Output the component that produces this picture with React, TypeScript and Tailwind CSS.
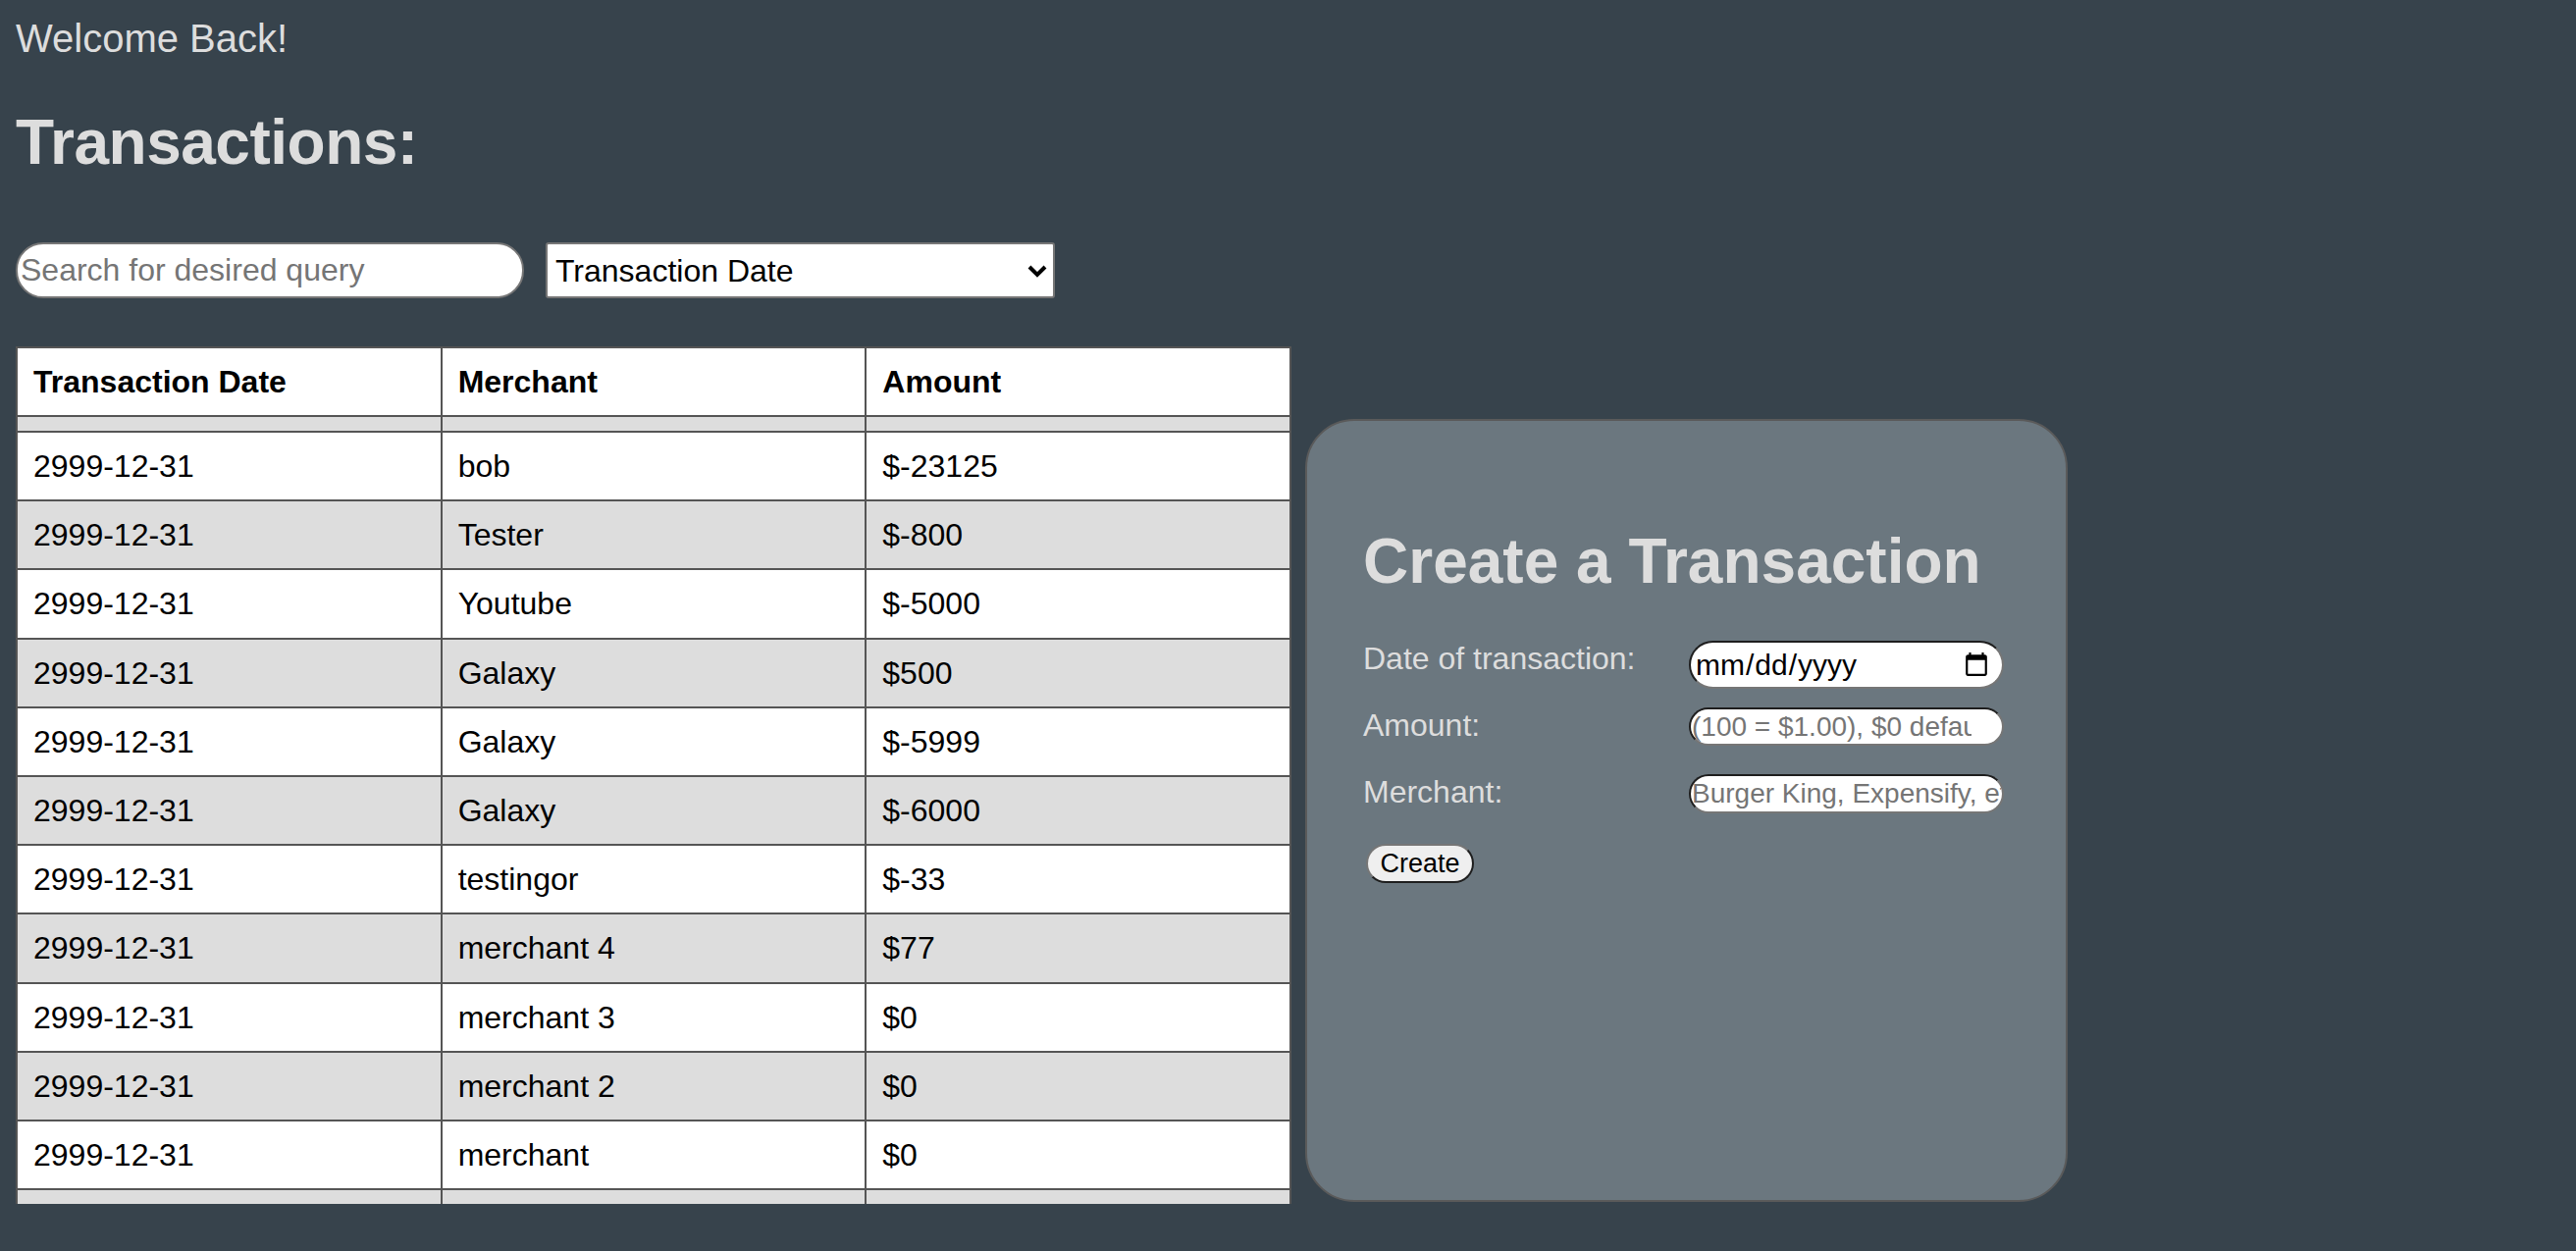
import { useState } from 'react';

const transactions = [
  { date: '2999-12-31', merchant: 'bob', amount: '$-23125' },
  { date: '2999-12-31', merchant: 'Tester', amount: '$-800' },
  { date: '2999-12-31', merchant: 'Youtube', amount: '$-5000' },
  { date: '2999-12-31', merchant: 'Galaxy', amount: '$500' },
  { date: '2999-12-31', merchant: 'Galaxy', amount: '$-5999' },
  { date: '2999-12-31', merchant: 'Galaxy', amount: '$-6000' },
  { date: '2999-12-31', merchant: 'testingor', amount: '$-33' },
  { date: '2999-12-31', merchant: 'merchant 4', amount: '$77' },
  { date: '2999-12-31', merchant: 'merchant 3', amount: '$0' },
  { date: '2999-12-31', merchant: 'merchant 2', amount: '$0' },
  { date: '2999-12-31', merchant: 'merchant', amount: '$0' },
];

const cell = 'border-r-2 border-b-2 border-[#555555] px-4 align-middle';

const TransactionTable = () => {
  return (
    <div className="h-[874px] w-[1300px] shrink-0 overflow-hidden">
      <table className="w-full table-fixed border-separate border-spacing-0 border-l-2 border-t-2 border-[#555555] text-[32px] text-black">
        <thead>
          <tr className="bg-white">
            <th className={`${cell} h-[70px] text-left font-bold`}>Transaction Date</th>
            <th className={`${cell} h-[70px] text-left font-bold`}>Merchant</th>
            <th className={`${cell} h-[70px] text-left font-bold`}>Amount</th>
          </tr>
        </thead>
        <tbody>
          <tr className="bg-[#dddddd]">
            <td className={`${cell} h-[16px]`}></td>
            <td className={`${cell} h-[16px]`}></td>
            <td className={`${cell} h-[16px]`}></td>
          </tr>
          {transactions.map((t, i) => (
            <tr key={i} className={i % 2 === 0 ? 'bg-white' : 'bg-[#dddddd]'}>
              <td className={`${cell} h-[70.2px]`}>{t.date}</td>
              <td className={`${cell} h-[70.2px]`}>{t.merchant}</td>
              <td className={`${cell} h-[70.2px]`}>{t.amount}</td>
            </tr>
          ))}
          {/* next row, cut off by the scroll box */}
          <tr className="bg-[#dddddd]">
            <td className={`${cell} h-[70px]`}></td>
            <td className={`${cell} h-[70px]`}></td>
            <td className={`${cell} h-[70px]`}></td>
          </tr>
        </tbody>
      </table>
    </div>
  );
};

const fieldBorder =
  'rounded-full border-2 border-t-[#1e1e1e] border-l-[#1e1e1e] border-r-[#767676] border-b-[#767676] bg-white text-black';

const CreateTransaction = () => {
  return (
    <div className="mt-[74px] h-[798px] w-[777px] shrink-0 rounded-[50px] border-2 border-[#5a5a5a] bg-[#6b777f] pl-[57px] pt-[106px]">
      <h1 className="text-[64px] font-bold leading-[74px] text-[#dddddd]">Create a Transaction</h1>

      <div className="mt-[44px] text-[32px] leading-[37px] text-[#dddddd]">
        <div className="flex h-[68px] items-start">
          <label className="w-[332px]">Date of transaction:</label>
          <input
            type="date"
            className={`${fieldBorder} h-[49px] w-[321px] pl-[4px] pr-[10px] text-[30px] [&::-webkit-calendar-picker-indicator]:h-[28px] [&::-webkit-calendar-picker-indicator]:w-[28px]`}
          />
        </div>
        <div className="flex h-[68px] items-start">
          <label className="w-[332px]">Amount:</label>
          <input
            type="number"
            placeholder="(100 = $1.00), $0 default"
            className={`${fieldBorder} h-[39px] w-[321px] pl-[1px] pr-[16px] text-[28px] placeholder:text-[#757575]`}
          />
        </div>
        <div className="flex h-[68px] items-start">
          <label className="w-[332px]">Merchant:</label>
          <input
            type="text"
            placeholder="Burger King, Expensify, etc."
            className={`${fieldBorder} h-[40px] w-[321px] px-[1px] text-[28px] placeholder:text-[#757575]`}
          />
        </div>
      </div>

      <button className="ml-[3px] mt-[3px] h-[40px] w-[110px] rounded-full border-2 border-t-[#767676] border-l-[#767676] border-r-[#1e1e1e] border-b-[#1e1e1e] bg-[#efefef] text-[27px] leading-none text-black">
        Create
      </button>
    </div>
  );
};

export default function App() {
  const [query, setQuery] = useState('');
  const [sortBy, setSortBy] = useState('date');

  return (
    <div className="min-h-screen bg-[#37434c] p-4 font-['Liberation_Sans',_Arial,_sans-serif] text-[#dddddd]">
      <p className="text-[40px] leading-[46px]">Welcome Back!</p>
      <h1 className="mt-[46px] text-[64px] font-bold leading-[74px] tracking-[-0.5px]">Transactions:</h1>

      <div className="mt-[65px] flex items-center gap-[22px]">
        <input
          type="text"
          value={query}
          onChange={(e) => setQuery(e.target.value)}
          placeholder="Search for desired query"
          className="h-[57px] w-[518px] rounded-[28px] border-2 border-[#767676] bg-white px-[3px] text-[32px] text-black placeholder:text-[#757575]"
        />
        <div className="relative">
          <select
            value={sortBy}
            onChange={(e) => setSortBy(e.target.value)}
            className="h-[57px] w-[519px] appearance-none rounded-[3px] border-2 border-[#767676] bg-white pl-[8px] text-[32px] text-black"
          >
            <option value="date">Transaction Date</option>
            <option value="merchant">Merchant</option>
            <option value="amount">Amount</option>
          </select>
          <svg
            className="pointer-events-none absolute right-[8px] top-[23px]"
            width="20"
            height="13"
            viewBox="0 0 20 13"
            fill="none"
            stroke="black"
            strokeWidth="4"
          >
            <polyline points="2,2 10,10 18,2" />
          </svg>
        </div>
      </div>

      <div className="mt-[49px] flex items-start gap-[14px]">
        <TransactionTable />
        <CreateTransaction />
      </div>
    </div>
  );
}
